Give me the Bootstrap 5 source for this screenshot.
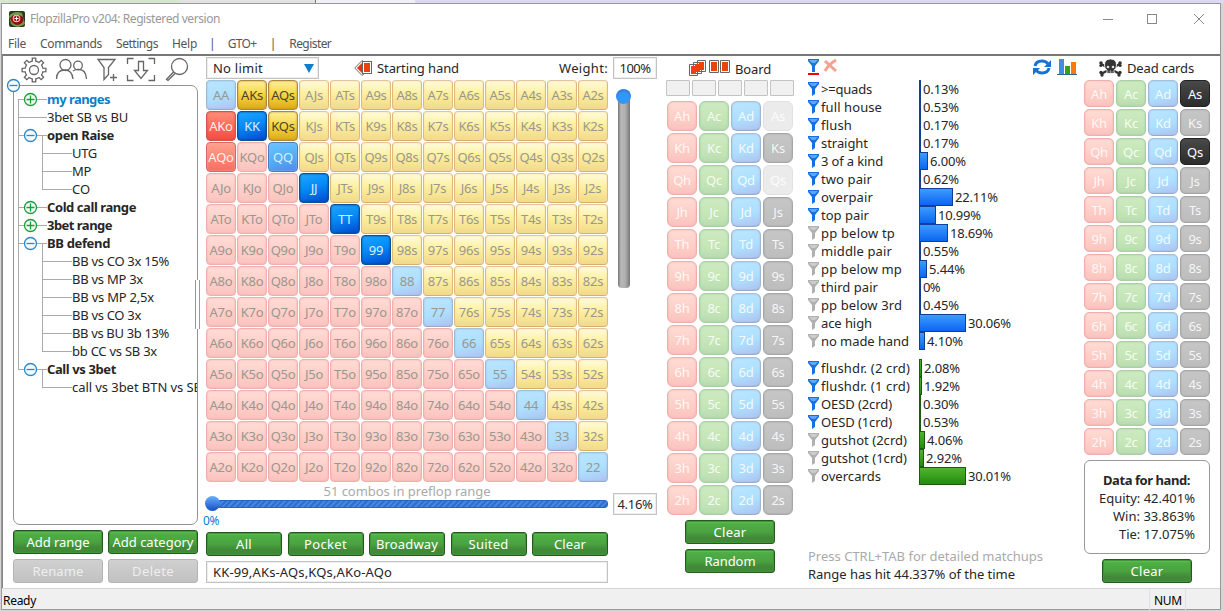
<!DOCTYPE html>
<html lang="en">
<head>
<meta charset="utf-8">
<title>FlopzillaPro</title>
<link href="https://cdn.jsdelivr.net/npm/bootstrap@5.3.0/dist/css/bootstrap.min.css" rel="stylesheet">
<style>
*{box-sizing:border-box}
body{width:1224px;height:611px;overflow:hidden;background:#d4d5d4;font:13px/18px "Noto Sans","Open Sans",sans-serif;color:#262626;letter-spacing:-.25px}
svg{display:block;flex:none}
.desk-top{height:3px;background:linear-gradient(90deg,#d6e6d0 0 180px,#e2e2e2 180px 315px,#777 315px 316px,#efeff5 316px 415px,#ddd9f1 415px)}
.win{width:1220px;height:607px;margin-left:1px;background:#fff;border:solid #999;border-width:1px 1px 2px}
.title-bar{height:29px;padding-left:7px;color:#999;font-size:12px;letter-spacing:0}
.menu-bar{height:21px;font-size:12px;color:#555;padding-left:6px;letter-spacing:0}
.menu-bar span{white-space:nowrap;flex:none}
.workspace{height:534px;border-top:2px solid #777;border-left:1px solid #888;position:relative}
.colbox{flex:none}
.c-tree{width:185px;margin-left:10px}
.c-range{width:402px;margin-left:8px}
.c-weight{width:44px;margin-left:5px}
.c-board{width:130px;margin-left:9px}
.c-stats{width:260px;margin-left:12px}
.c-dead{width:126px;margin-left:16px}
.toolbar{height:29px}
.tree{position:relative;height:440px;border:1px solid #929292;border-radius:7px;padding:4px 0 0 33px;overflow:hidden}
.tree div{white-space:nowrap;height:18px}
.tree .sub{padding-left:25px}
.tree b{font-weight:700}
.t-lines{position:absolute;left:-8px;top:-8px;pointer-events:none}
.b-g,.b-d{height:24px;border-radius:3px;color:#fff;display:flex;align-items:center;justify-content:center;font-size:13px;padding:0 0 1px;white-space:nowrap}
.b-g{border:1px solid #245a1e;background:linear-gradient(#6fc860 0,#4fae45 12%,#4aa340 50%,#418a37 75%,#43883a);box-shadow:inset 0 0 0 1px #3f9636}
.b-d{border:1px solid #b4b4b4;background:linear-gradient(#d0d0d0,#c1c1c1);color:#eee}
.w90{width:90px}
.w76{width:76px}
.field{height:22px;border:1px solid #c3c3c3;box-shadow:inset 0 0 0 1px #eee;background:#fff;white-space:nowrap;line-height:20px}
.grid13{display:grid;grid-template-columns:repeat(13,30px);gap:1px}
.grid4{display:grid;grid-template-columns:repeat(4,30px);gap:2px;padding-left:1px}
.cellx{height:30px;border-radius:4px;border:1px solid;display:flex;align-items:center;justify-content:center;font-size:13px;letter-spacing:-.25px;color:#999790;padding-bottom:0;white-space:nowrap}
.su{background:linear-gradient(#fffbdc,#fdf0a0 45%,#f1d98a);border-color:#e4c3a0 #dfb97c #d9ae68;box-shadow:inset 0 0 2px #f5dca0}
.of,.h{background:linear-gradient(#ffdcd6,#fecdc6 60%,#fac3bf);border-color:#efb0ad;box-shadow:inset 0 0 2px #f2aaa7}
.pp,.d{background:linear-gradient(165deg,#bce5ff,#ade0ff 55%,#aec2f0);border-color:#a0c2da #9bb9d6 #9aa9c8;box-shadow:inset 0 0 2px #9dbadd}
.su.on{background:linear-gradient(#fdef9a,#f7d541 50%,#dcaa18);border-color:#ad873f;color:#49452d;box-shadow:inset 0 0 2px #b18b2c}
.of.on{background:linear-gradient(#ff8d78,#fb6657 60%,#f34c40);border-color:#cf5650;color:#fff0ec;box-shadow:inset 0 0 2px #d34e46}
.of.mid{background:linear-gradient(#ffa08e,#fd8371 60%,#f56d61);border-color:#d56863;color:#fff0ec}
.pp.on{background:linear-gradient(165deg,#1fa5ff,#068bf7 45%,#0348ce);border-color:#07529b;color:#d8efff;box-shadow:inset 0 0 2px #03407c}
.pp.mid{background:linear-gradient(165deg,#6cc4ff,#50adf8 55%,#5487e6);border-color:#447fb9;color:#d8efff}
.c{background:linear-gradient(#cdeac0,#c4e6b6 60%,#b9dbb1);border-color:#aacfa4;box-shadow:inset 0 0 2px #9fcb9a}
.s{background:linear-gradient(#c6c6c6,#bdbdbd);border-color:#a6a6a6;box-shadow:inset 0 0 2px #a5a5a5}
.pcard{border-radius:6px;color:#fffd}
.dim{background:#ebebeb;border-color:#e1e1e1;box-shadow:none}
.dark{background:linear-gradient(#494949,#2c2c2c);border-color:#222;color:#fff;box-shadow:none}
.grid-d .cellx{height:27px;border-radius:5px}
.slot{width:24px;height:16px;border:1px solid #c3c3c3;background:#f0f0f0;border-radius:1px}
.combo{height:17px;line-height:18px;text-align:center;color:#aaa}
.hbar{height:8px;width:396px;margin-left:6px;border-radius:3px;background:repeating-linear-gradient(135deg,#2f6fd1 0 2px,#4586e0 2px 4px);border:1px solid #2866bd}
.knob{position:absolute;border-radius:50%;width:15px;height:15px}
.vbar{width:12px;height:198px;margin:11px 0 0 5px;background:linear-gradient(90deg,#777,#b9b9b9 25%,#b0b0b0 60%,#777);border-radius:4px}
.stat{height:18px;white-space:nowrap}
.meter{height:18px;border:1px solid #123f92;background:linear-gradient(#3d9bff,#0b66f0);flex:none}
.meter.gr{border-color:#1d5a10;background:linear-gradient(#4fb52c,#248a10)}
.databox{width:126px;height:94px;border:1px solid #999;border-radius:6px;padding:10px 14px 0 0;text-align:right}
.status{height:21px;background:#f0f0f0;border-top:1px solid #d5d5d5;font-size:12px;color:#000;letter-spacing:0}
.split{position:absolute;left:192px;top:224px;width:5px;height:49px;border:solid #999;border-width:0 1px;background:#fff}
</style>
<script src="https://cdn.jsdelivr.net/npm/bootstrap@5.3.0/dist/js/bootstrap.bundle.min.js"></script>
</head>
<body>
<div class="desk-top"></div>
<div class="win">
  <header class="title-bar d-flex align-items-center">
    <svg width="16" height="16" viewBox="0 0 16 16"><rect width="16" height="16" rx="2" fill="#29391c"/><path d="M0 5Q5-1 13 2L16 13Q8 19 2 13Z" fill="#6f9a48"/><path d="M1 7Q6 1 14 6Q16 12 9 14Q3 14 1 7Z" fill="#8c0f12"/><circle cx="7.500" cy="7.500" r="3.800" fill="#e6cdc4"/><circle cx="7.500" cy="7.500" r="2.800" fill="#b01414"/><path d="M7.500 5.500v4M5.500 7.500h4" stroke="#fff"/></svg>
    <span style="margin-left:5px" data-w="190">FlopzillaPro v204: Registered version</span>
    <svg class="ms-auto" width="121" height="16" viewBox="0 0 121 16" fill="none" stroke="#888"><path d="M4 8.500h10"/><rect x="48.500" y="3.500" width="9" height="9"/><path d="M95 3l10 10M105 3L95 13"/></svg>
  </header>
  <nav class="menu-bar d-flex align-items-center">
    <span data-w="18">File</span><span style="margin-left:14px" data-w="62">Commands</span><span style="margin-left:14px" data-w="42">Settings</span><span style="margin-left:14px" data-w="25">Help</span><span style="margin-left:12px">|</span><span style="margin-left:12px" data-w="29">GTO+</span><span style="margin-left:13px">|</span><span style="margin-left:13px" data-w="42">Register</span>
  </nav>
  <main class="workspace d-flex align-items-start">
    <section class="colbox c-tree">
      <div class="toolbar">
        <svg width="185" height="29" viewBox="13 56 185 29" fill="none" stroke="#666" stroke-width="1.300">
          <path id="gear"/><circle cx="34" cy="70" r="4.500"/>
          <path d="M56.500 79q0-9 8.500-9q7 0 8 9M73 71q3-2 6-1.500q7 0 7.500 9.500"/><circle cx="65.500" cy="65" r="5.500"/><circle cx="78" cy="65.500" r="4.300"/>
          <path d="M98 59.500h17l-6.500 8v7l-4.500 5v-12zM113.500 74v7M110 77.500h7"/>
          <path d="M127.500 64v-5.500h6M148.500 58.500h6V64M127.500 75v5.500h6M148.500 80.500h6V75"/><path d="M138.500 61.500h5v9h4l-6.500 8-6.500-8h4z"/>
          <circle cx="179.500" cy="66.500" r="8"/><path d="M173.500 72l-7 7.500 1.500 1 7-7"/>
        </svg>
      </div>
      <div class="position-relative">
        <div class="tree" id="tree"></div>
        <svg class="t-lines" id="lines" width="190" height="330" viewBox="5 77 190 330"></svg>
      </div>
      <div class="d-flex justify-content-between" style="margin-top:5px"><div class="b-g w90"><span data-w="63">Add range</span></div><div class="b-g w90"><span data-w="81">Add category</span></div></div>
      <div class="d-flex justify-content-between" style="margin-top:5px"><div class="b-d w90"><span data-w="51">Rename</span></div><div class="b-d w90"><span data-w="42">Delete</span></div></div>
    </section>
    <section class="colbox c-range">
      <div class="d-flex align-items-center" style="height:24px">
        <div class="field d-flex justify-content-between align-items-center" style="width:113px;padding:0 4px 0 6px"><span data-w="50">No limit</span><svg width="10" height="9"><path d="M0 0h10L5 9z" fill="#0a7fce"/></svg></div>
        <svg style="margin-left:35px" width="18" height="16" viewBox="0 0 18 16"><path d="M8 .5L.7 8 8 15.500l2-1.500V2z" fill="#eee" stroke="#777"/><path d="M8 3L3 8l5 5z" fill="#e8340a"/><rect x="8.500" y="1.500" width="9" height="12" fill="#fff" stroke="#666"/><rect x="10" y="3" width="6" height="9" fill="#f0400c"/></svg>
        <span style="margin-left:5px" data-w="82">Starting hand</span>
        <span class="ms-auto" data-w="49">Weight:</span>
      </div>
      <div class="grid13" id="hands"></div>
      <div class="combo"><span data-w="167">51 combos in preflop range</span></div>
      <div class="position-relative" style="padding-top:1px"><div class="hbar"></div><i class="knob" style="left:-1px;top:-3px;background:linear-gradient(#6baefc,#1250c4)"></i></div>
      <div style="color:#0a7fce;font-size:12px;height:24px;padding-top:4px;margin-left:-3px">0%</div>
      <div class="d-flex justify-content-between" id="quick"></div>
      <div class="field" style="margin-top:5px;padding-left:6px"><span data-w="179">KK-99,AKs-AQs,KQs,AKo-AQo</span></div>
    </section>
    <section class="colbox c-weight">
      <div class="field text-center" style="margin-top:1px"><span data-w="31">100%</span></div>
      <div class="position-relative"><div class="vbar"></div><i class="knob" style="left:3px;top:-1px;background:radial-gradient(circle at 50% 65%,#1ea0ff,#3b93f0 45%,#1d6fd6)"></i></div>
      <div class="field text-center" style="margin-top:205px"><span data-w="35">4.16%</span></div>
    </section>
    <section class="colbox c-board">
      <div class="d-flex align-items-start" style="height:24px;padding:2px 0 0 23px">
        <svg width="41" height="20" viewBox="0 0 41 20"><g stroke="#666" fill="#fff"><path d="M8.500 2.500h8v11h-8zM4.500 4.500h8v11h-8zM.5 6.500h8v11h-8zM20.500 2.500h9v12h-9zM31.500 2.500h9v12h-9z"/></g><path d="M10 4h5v8h-5zM6 6h5v8H6zM2 8h5v8H2zM22 4h6v9h-6zM33 4h6v9h-6z" fill="#ee420d"/></svg>
        <span style="margin:2px 0 0 5px" data-w="36">Board</span>
      </div>
      <div class="d-flex" style="gap:2px;margin-bottom:5px"><i class="slot"></i><i class="slot"></i><i class="slot"></i><i class="slot"></i><i class="slot"></i></div>
      <div class="grid4" id="board"></div>
      <div class="b-g w90" style="margin:5px 0 5px 19px"><span data-w="33">Clear</span></div>
      <div class="b-g w90" style="margin-left:19px"><span data-w="51">Random</span></div>
    </section>
    <section class="colbox c-stats">
      <div class="d-flex align-items-start" style="height:24px;padding-top:2px">
        <svg width="30" height="18" viewBox="0 0 30 18"><path d="M0 1h11v2L7 8v6H4V8L0 3z" fill="#2070e0"/><path d="M1 2h9L7 5H4z" fill="#62adff"/><path d="M0 16h11" stroke="red" stroke-width="2"/><path d="M17 3l11 10M28 2q-7 4-11 11" stroke="#f6a090" stroke-width="3"/></svg>
        <svg style="margin-left:195px" width="45" height="18" viewBox="0 0 45 18"><path d="M2 8q1-5 7-5 4 0 6 3M16 10q-1 5-7 5-4 0-6-3" fill="none" stroke="#1672d4" stroke-width="3"/><path d="M18 2v7h-7zM0 17v-7h7z" fill="#1672d4"/><path d="M26 1h5v15h-5z" fill="#3b8fe0"/><path d="M32 8h5v8h-5z" fill="#3a9f18"/><path d="M38 4h5v12h-5z" fill="#f47a14"/><path d="M24 16.500h20" stroke="#368"/></svg>
      </div>
      <div id="stats"></div>
      <div style="color:#aaa;margin-top:62px"><span data-w="235">Press CTRL+TAB for detailed matchups</span></div>
      <div><span data-w="207">Range has hit 44.337% of the time</span></div>
    </section>
    <section class="colbox c-dead">
      <div class="d-flex align-items-center" style="height:24px;padding-left:15px">
        <svg width="23" height="18" viewBox="0 0 23 18"><path d="M2 5l19 10M21 5L2 15" stroke="#333" stroke-width="2.500"/><g fill="#333"><circle cx="2" cy="4" r="1.800"/><circle cx="1.800" cy="6.500" r="1.500"/><circle cx="21" cy="4" r="1.800"/><circle cx="21.200" cy="6.500" r="1.500"/><circle cx="2" cy="13.500" r="1.700"/><circle cx="3" cy="16" r="1.700"/><circle cx="21" cy="13.500" r="1.700"/><circle cx="20" cy="16" r="1.700"/><path stroke="#fff" stroke-width=".8" d="M5.500 6q0-6 6-6t6 6q0 4-2.500 5v3.500H8V11Q5.500 10 5.500 6z"/></g><circle cx="9" cy="8" r="1.300" fill="#ddd"/><circle cx="14" cy="8" r="1.300" fill="#ddd"/><path d="M10 12v2M11.500 11v3M13 12v2" stroke="#ccc" stroke-width=".6"/></svg>
        <span style="margin-left:5px" data-w="67">Dead cards</span>
      </div>
      <div class="grid4 grid-d ps-0" id="dead"></div>
      <div class="databox" style="margin-top:5px"><b style="padding-right:5px"><span data-w="87">Data for hand:</span></b><br><span data-w="96">Equity: 42.401%</span><br><span data-w="82">Win: 33.863%</span><br><span data-w="76">Tie: 17.075%</span></div>
      <div class="b-g w90" style="margin:5px 0 0 18px"><span data-w="33">Clear</span></div>
    </section>
    <div class="split"></div>
  </main>
  <footer class="status d-flex align-items-center"><span style="padding:3px 0 0 1px" data-w="33">Ready</span><span class="ms-auto border-start border-end" style="padding:3px 3px 0 4px;margin-right:34px"><span data-w="28">NUM</span></span></footer>
</div>
<script>
const $=id=>document.getElementById(id), R='AKQJT98765432';
// Gear outline with eight teeth
let g='';
for(let k=0;k<8;k++)[[-.36,9],[-.2,9],[-.14,12],[.14,12],[.2,9],[.36,9]].forEach(([a,r],i)=>{const t=k*Math.PI/4+a;g+=(k||i?'L':'M')+(34+r*Math.cos(t)).toFixed(1)+' '+(70+r*Math.sin(t)).toFixed(1)});
$('gear').setAttribute('d',g+'Z');
// Category tree: kind, label, width
const tree=[['+','my ranges',63],['','3bet SB vs BU',81],['-','open Raise',67],['s','UTG',25],['s','MP',19],['s','CO',18],['+','Cold call range',89],['+','3bet range',65],['-','BB defend',63],['s','BB vs CO 3x 15%',97],['s','BB vs MP 3x',71],['s','BB vs MP 2,5x',82],['s','BB vs CO 3x',69],['s','BB vs BU 3b 13%',97],['s','bb CC vs SB 3x',85],['-','Call vs 3bet',69],['s','call vs 3bet BTN vs SB',130]];
let L='M18.5 99V369M42.500 135V189M42.500 243V351M42.500 369V387',C='';
const circ=(x,y,k)=>`<circle cx="${x}" cy="${y}" r="6" fill="#f7fbfa" stroke="${k=='+'?'#18a038':'#2b88cc'}" stroke-width="1.300"/><path d="M${x-4} ${y}h8${k=='+'?`M${x} ${y-4}v8`:''}" stroke="${k=='+'?'#18a038':'#2b88cc'}" stroke-width="1.300"/>`;
tree.forEach(([k,t,w],i)=>{const y=99.500+18*i;L+=k=='s'?`M42 ${y}H72`:`M18 ${y}H47`;if(k=='+'||k=='-')C+=circ(30.5,y,k);
 $('tree').innerHTML+=`<div class="${k=='s'?'sub':''}"${i?'':' style="color:#0a7fce"'}>${k=='+'||k=='-'?'<b>':''}<span data-w="${w}">${t}</span>${k=='+'||k=='-'?'</b>':''}</div>`});
$('lines').innerHTML=`<path d="${L}" stroke="#aaa" fill="none"/>`+C+circ(13.5,85.5,'-');
// Starting hand matrix
const on=['AKs','AQs','AKo','KK','KQs','JJ','TT','99'],mid=['AQo','QQ'];
let H='';
for(let r=0;r<13;r++)for(let c=0;c<13;c++){const n=r==c?R[r]+R[r]:c>r?R[r]+R[c]+'s':R[c]+R[r]+'o';H+=`<div class="cellx ${r==c?'pp':c>r?'su':'of'} ${on.includes(n)?'on':mid.includes(n)?'mid':''}">${n}</div>`}
$('hands').innerHTML=H;
const deck=f=>[...R].flatMap(r=>[...'hcds'].map(s=>`<div class="cellx pcard ${s} ${f(r+s)}">${r+s}</div>`)).join('');
$('board').innerHTML=deck(n=>n=='As'||n=='Qs'?'dim':'');
$('dead').innerHTML=deck(n=>n=='As'||n=='Qs'?'dark':'');
$('quick').innerHTML=[['All',16],['Pocket',43],['Broadway',62],['Suited',40],['Clear',32]].map(([t,w])=>`<div class="b-g w76"><span data-w="${w}">${t}</span></div>`).join('');
// Hit statistics: label, width, percent, filter active
const st=[['>=quads',51,'0.13',1],['full house',61,'0.53',1],['flush',31,'0.17',1],['straight',47,'0.17',1],['3 of a kind',62,'6.00',1],['two pair',51,'0.62',1],['overpair',52,'22.11',1],['top pair',48,'10.99',1],['pp below tp',74,'18.69',0],['middle pair',71,'0.55',0],['pp below mp',81,'5.44',0],['third pair',57,'0',0],['pp below 3rd',81,'0.45',0],['ace high',51,'30.06',0],['no made hand',88,'4.10',0],0,['flushdr. (2 crd)',89,'2.08',1],['flushdr. (1 crd)',89,'1.92',1],['OESD (2crd)',71,'0.30',1],['OESD (1crd)',71,'0.53',1],['gutshot (2crd)',86,'4.06',0],['gutshot (1crd)',86,'2.92',0],['overcards',60,'30.01',0]];
let green='';
$('stats').innerHTML=st.map(s=>{if(!s){green='gr';return '<div style="height:9px"></div>'}
 const [t,w,p,a]=s,b=p<1?1:Math.max(3,Math.round(p*1.56));
 return `<div class="stat d-flex"><div class="d-flex align-items-center" style="width:111px;flex:none"><svg width="11" height="14" viewBox="0 0 11 14" style="margin-right:2px"><path d="M0 0h11v2L7 7v5l-3 2V7L0 2z" fill="${a?'#1670e4':'#b0b0b0'}"/><path d="M1 1h9L7 4H4z" fill="${a?'#5aa8ff':'#ccc'}"/></svg><span data-w="${w}">${t}</span></div><div class="meter ${green}" style="width:${b}px"></div><span style="margin-left:2px" data-w="${p=='0'?17:p.length>4?43:36}">${p}%</span></div>`}).join('');
// Track each label to its design width
document.querySelectorAll('[data-w]').forEach(e=>{e.style.letterSpacing='0px';e.style.whiteSpace='nowrap';const pad=parseFloat(getComputedStyle(e).paddingLeft);e.style.letterSpacing=((e.dataset.w-e.getBoundingClientRect().width+pad)/e.textContent.length).toFixed(3)+'px'});
</script>
</body>
</html>
